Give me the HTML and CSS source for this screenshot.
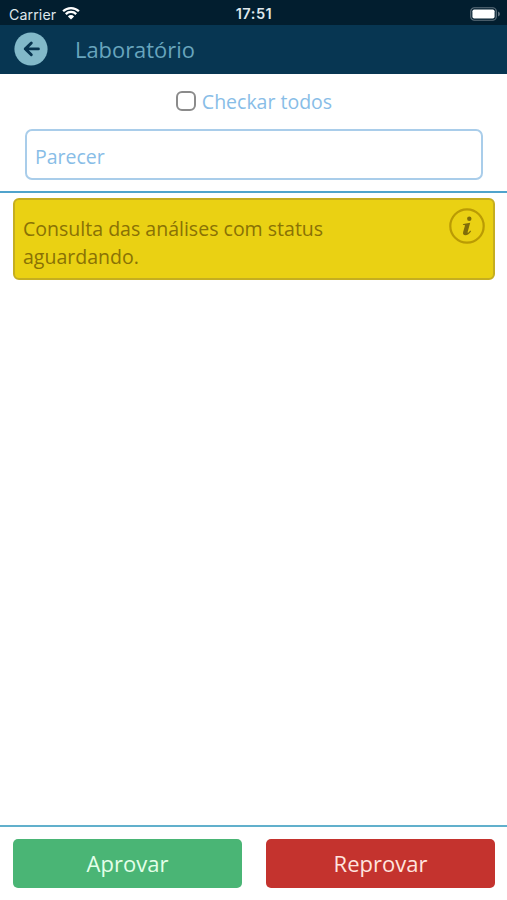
FILE: index.html
```html
<!DOCTYPE html>
<html lang="pt-BR">
<head>
<meta charset="utf-8">
<meta name="viewport" content="width=device-width, initial-scale=1">
<title>Laboratório</title>
<link rel="stylesheet" href="styles.css">
</head>
<body>
<div class="status-bar">
  <div class="carrier"><span class="carrier-name">Carrier</span>
    <svg class="wifi" viewBox="0 0 18 14" aria-hidden="true"><path d="M1.1 5.3a11.3 11.3 0 0 1 15.8 0M3.8 8.1a7.4 7.4 0 0 1 10.4 0" fill="none" stroke="#fff" stroke-width="2.3"/><path d="M9 13.5 5.9 10.4a4.4 4.4 0 0 1 6.2 0z" fill="#fff"/></svg>
  </div>
  <div class="clock">17:51</div>
  <svg class="battery" viewBox="0 0 31 14" aria-hidden="true"><rect x=".75" y=".75" width="25.5" height="12.5" rx="3.6" fill="none" stroke="#60717d" stroke-width="1.2"/><rect x="2.4" y="2.4" width="22.2" height="9.2" rx="1.8" fill="#fff"/><path d="M28 4.6q2 .8 2 2.4t-2 2.4z" fill="#60717d"/></svg>
</div>
<header class="header">
  <button class="back" aria-label="Voltar"><svg viewBox="0 0 34 34"><circle cx="17" cy="17" r="16.6" fill="#82b9c9"/><path d="M24.4 16.9H11.2M17.3 11l-6 5.9 6 5.9" fill="none" stroke="#07344f" stroke-width="2.9" stroke-linecap="round" stroke-linejoin="round"/></svg></button>
  <h1 class="title">Laboratório</h1>
</header>
<section class="form">
  <label class="check-all"><input class="checkbox" type="checkbox"><span class="check-text">Checkar todos</span></label>
  <input class="opinion" type="text" placeholder="Parecer">
</section>
<main class="content">
  <div class="notice">
    <p class="notice-text">Consulta das análises com status aguardando.</p>
    <svg class="info" viewBox="0 0 36 36" aria-hidden="true"><circle cx="18" cy="18" r="16.7" fill="none" stroke="#ba9b04" stroke-width="2.2"/><circle cx="20.3" cy="10.7" r="2.2" fill="#806d0a"/><path d="M14.3 15.9l6.9-1.1-2.5 8.9c-.3 1.2.2 1.3 1 .5l1.6-1.6.8.7c-1.7 2.6-3.6 4-5.6 4-2.2 0-2.9-1.3-2.3-3.5l1.6-5.6c.3-1.1.1-1.3-.8-1.3h-1.2z" fill="#806d0a"/></svg>
  </div>
</main>
<footer class="actions">
  <button class="button approve">Aprovar</button>
  <button class="button reject">Reprovar</button>
</footer>
</body>
</html>
```

FILE: styles.css
```css
* { box-sizing: border-box; }
body {
  margin: 0;
  height: 900px;
  display: flex;
  flex-direction: column;
  background: #fff;
  font-family: "Open Sans", "Noto Sans", sans-serif;
  overflow: hidden;
}
button, input { font-family: inherit; }
.status-bar {
  height: 25px;
  padding: 0 6px 0 9px;
  display: grid;
  grid-template-columns: 1fr auto 1fr;
  align-items: center;
  background: #021e2f;
  color: #dfe7eb;
  font: 14.2px/25px Inter, sans-serif;
}
.carrier { display: flex; align-items: center; gap: 6px; padding-top: 2px; }
.carrier-name { letter-spacing: .1px; }
.wifi { width: 18px; height: 14px; margin-top: -4px; }
.clock { font-weight: 600; padding: 2px 2px 0 0; font-size: 14.6px; letter-spacing: .5px; }
.battery { width: 31px; height: 14px; justify-self: end; margin-top: 1px; }
.header {
  height: 49px;
  display: flex;
  align-items: center;
  gap: 27px;
  padding: 0 14px 2px;
  background: #073652;
}
.back { width: 34px; height: 34px; padding: 0; border: 0; background: none; }
.back svg { display: block; width: 34px; height: 34px; }
.title { margin: 2px 0 0; color: #68a5bd; font-size: 21.9px; font-weight: 400; line-height: 30px; }
.form {
  height: 119px;
  padding: 13px 24px 0 25px;
  display: flex;
  flex-direction: column;
  align-items: center;
  gap: 14px;
  border-bottom: 2px solid #50a3cc;
}
.check-all { display: flex; align-items: center; gap: 6px; height: 28px; color: #88bde7; font-size: 19.5px; }
.checkbox {
  appearance: none;
  width: 20px;
  height: 20px;
  margin: 0;
  border: 2px solid #8b8b8b;
  border-radius: 6px;
  background: #fff;
}
.opinion {
  width: 100%;
  height: 51px;
  padding: 4px 8px 0;
  border: 2px solid #a9cdea;
  border-radius: 7px;
  color: #88bde7;
  font-size: 19.5px;
  outline: 0;
}
.opinion::placeholder { color: #88bde7; opacity: 1; }
.content { flex: 1; padding: 5px 12px 0 13px; }
.notice {
  height: 82px;
  padding: 15px 8px 0 8px;
  display: flex;
  justify-content: space-between;
  align-items: flex-start;
  background: #ead113;
  border: 2px solid #c5ae20;
  border-radius: 6px;
}
.notice-text { width: 340px; margin: 0; color: #897205; font-size: 19.55px; line-height: 28px; }
.info { width: 36px; height: 36px; margin-top: -7px; }
.actions {
  height: 75px;
  padding: 12px 12px 0 13px;
  display: grid;
  grid-template-columns: 1fr 1fr;
  align-items: start;
  gap: 24px;
  border-top: 2px solid #61b0cc;
}
.button { height: 49px; padding: 0 0 2px; border: 0; border-radius: 5px; font-size: 22px; line-height: 30px; }
.approve { background: #4ab575; color: #e4ffe9; }
.reject { background: #c4332e; color: #ffe4df; }
```
